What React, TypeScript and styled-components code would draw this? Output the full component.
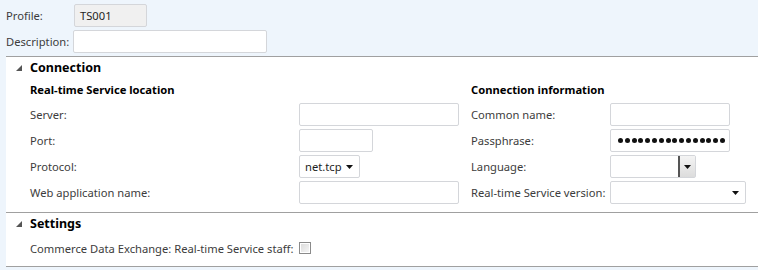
import React from "react";
import styled, { createGlobalStyle } from "styled-components";

const Global = createGlobalStyle`
  html, body { margin: 0; padding: 0; }
  body {
    background: #eef5fc;
    font-family: "Noto Sans", "Open Sans", sans-serif;
    font-size: 11.2px;
    color: #3c3c3c;
  }
`;

const Page = styled.div`
  width: 758px;
  height: 270px;
  display: flex;
  flex-direction: column;
`;

const Header = styled.div`
  display: grid;
  grid-template-columns: 67px auto;
  grid-auto-rows: 23px;
  row-gap: 3px;
  padding: 4px 0 3px 6px;
  align-items: center;
`;

const Label = styled.span`
  white-space: nowrap;
  color: #3c3c3c;
`;

const Field = styled.div<{ $w: number; $h?: number; $bg?: string }>`
  box-sizing: border-box;
  width: ${(p) => p.$w}px;
  height: ${(p) => p.$h ?? 23}px;
  background: ${(p) => p.$bg ?? "#fff"};
  border: 1px solid #d4d6da;
  border-radius: 2px;
  display: flex;
  align-items: center;
  padding-left: 5px;
  color: #1e1e1e;
`;

const Panel = styled.div`
  margin-left: 6px;
  background: #fff;
  border-top: 1px solid #a0a0a0;
  border-bottom: 1px solid #a0a0a0;
  display: flex;
  flex-direction: column;
`;

const Section = styled.section<{ $h: number; $top?: boolean }>`
  height: ${(p) => p.$h}px;
  box-sizing: border-box;
  border-top: ${(p) => (p.$top ? "1px solid #a0a0a0" : "none")};
  display: flex;
  flex-direction: column;
`;

const SectionHead = styled.div`
  height: 21px;
  display: flex;
  align-items: center;
  padding-left: 10px;
  gap: 8px;
`;

const SectionTitle = styled.span`
  font-weight: 700;
  font-size: 12.5px;
  color: #000;
`;

const Columns = styled.div`
  display: grid;
  grid-template-columns: 441px auto;
  padding-left: 24px;
`;

const Group = styled.div<{ $label: number }>`
  display: grid;
  grid-template-columns: ${(p) => p.$label}px auto;
  grid-template-rows: 22px;
  grid-auto-rows: 23px;
  row-gap: 3px;
  align-items: center;
  justify-items: start;
`;

const GroupTitle = styled.div`
  grid-column: 1 / -1;
  font-weight: 700;
  color: #000;
  align-self: center;
`;

const Arrow = () => (
  <svg width="7" height="4" viewBox="0 0 7 4">
    <polygon points="0,0 7,0 3.5,4" fill="#111" />
  </svg>
);

const Collapse = () => (
  <svg width="6" height="6" viewBox="0 0 6 6">
    <polygon points="6,0 6,6 0,6" fill="#555" />
  </svg>
);

const Select = styled(Field)<{ $end?: boolean }>`
  justify-content: ${(p) => (p.$end ? "flex-end" : "space-between")};
  padding-right: 6px;
`;

const ComboButton = styled.div`
  width: 15px;
  height: 100%;
  border-left: 2px solid #555;
  background: linear-gradient(#f4f4f4, #dcdcdc);
  display: flex;
  align-items: center;
  justify-content: center;
`;

const Combo = styled(Field)`
  justify-content: flex-end;
  padding: 0;
`;

const Dots = styled.div`
  display: flex;
  gap: 1.8px;
  padding-left: 2px;
`;

const Dot = styled.span`
  width: 5px;
  height: 5px;
  border-radius: 50%;
  background: #111;
`;

const CheckRow = styled.div`
  display: flex;
  align-items: center;
  gap: 6px;
  padding: 3px 0 0 24px;
  height: 22px;
`;

const Checkbox = styled.span`
  box-sizing: border-box;
  width: 12px;
  height: 12px;
  border: 1px solid #8a8a8a;
  background: linear-gradient(135deg, #d9d9d9, #f7f7f7);
  box-shadow: inset 0 0 0 1px #fff;
`;

export default function App() {
  return (
    <Page>
      <Global />
      <Header>
        <Label>Profile:</Label>
        <Field $w={73} $bg="#f0f0f0" style={{ marginLeft: 1 }}>TS001</Field>
        <Label>Description:</Label>
        <Field $w={194}></Field>
      </Header>
      <Panel>
        <Section $h={155}>
          <SectionHead>
            <Collapse />
            <SectionTitle>Connection</SectionTitle>
          </SectionHead>
          <Columns>
            <Group $label={269}>
              <GroupTitle>Real-time Service location</GroupTitle>
              <Label>Server:</Label>
              <Field $w={160} />
              <Label>Port:</Label>
              <Field $w={74} />
              <Label>Protocol:</Label>
              <Select $w={61}>
                net.tcp
                <Arrow />
              </Select>
              <Label>Web application name:</Label>
              <Field $w={160} />
            </Group>
            <Group $label={139}>
              <GroupTitle>Connection information</GroupTitle>
              <Label>Common name:</Label>
              <Field $w={120} />
              <Label>Passphrase:</Label>
              <Field $w={120}>
                <Dots>
                  {Array.from({ length: 16 }).map((_, i) => (
                    <Dot key={i} />
                  ))}
                </Dots>
              </Field>
              <Label>Language:</Label>
              <Combo $w={86}>
                <ComboButton>
                  <Arrow />
                </ComboButton>
              </Combo>
              <Label>Real-time Service version:</Label>
              <Select $w={136} $end>
                <Arrow />
              </Select>
            </Group>
          </Columns>
        </Section>
        <Section $h={54} $top>
          <SectionHead>
            <Collapse />
            <SectionTitle>Settings</SectionTitle>
          </SectionHead>
          <CheckRow>
            <Label>Commerce Data Exchange: Real-time Service staff:</Label>
            <Checkbox />
          </CheckRow>
        </Section>
      </Panel>
    </Page>
  );
}
